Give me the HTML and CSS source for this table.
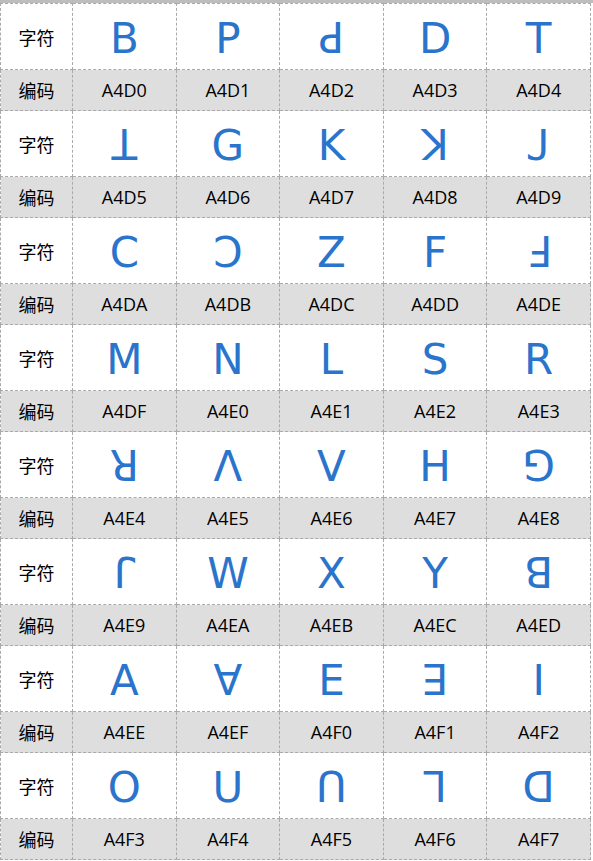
FILE: index.html
```html
<!DOCTYPE html>
<html lang="zh">
<head>
<meta charset="utf-8">
<title>Lisu</title>
<link rel="stylesheet" href="styles.css">
</head>
<body>
<div class="topstrip"></div>
<table class="chart">
<colgroup><col class="c-head"><col><col><col><col><col></colgroup>
<tbody>
<tr class="ch"><th>字符</th><td>&#xA4D0;</td><td>&#xA4D1;</td><td>&#xA4D2;</td><td>&#xA4D3;</td><td>&#xA4D4;</td></tr>
<tr class="cd"><th>编码</th><td>A4D0</td><td>A4D1</td><td>A4D2</td><td>A4D3</td><td>A4D4</td></tr>
<tr class="ch"><th>字符</th><td>&#xA4D5;</td><td>&#xA4D6;</td><td>&#xA4D7;</td><td>&#xA4D8;</td><td>&#xA4D9;</td></tr>
<tr class="cd"><th>编码</th><td>A4D5</td><td>A4D6</td><td>A4D7</td><td>A4D8</td><td>A4D9</td></tr>
<tr class="ch"><th>字符</th><td>&#xA4DA;</td><td>&#xA4DB;</td><td>&#xA4DC;</td><td>&#xA4DD;</td><td>&#xA4DE;</td></tr>
<tr class="cd"><th>编码</th><td>A4DA</td><td>A4DB</td><td>A4DC</td><td>A4DD</td><td>A4DE</td></tr>
<tr class="ch"><th>字符</th><td>&#xA4DF;</td><td>&#xA4E0;</td><td>&#xA4E1;</td><td>&#xA4E2;</td><td>&#xA4E3;</td></tr>
<tr class="cd"><th>编码</th><td>A4DF</td><td>A4E0</td><td>A4E1</td><td>A4E2</td><td>A4E3</td></tr>
<tr class="ch"><th>字符</th><td>&#xA4E4;</td><td>&#xA4E5;</td><td>&#xA4E6;</td><td>&#xA4E7;</td><td>&#xA4E8;</td></tr>
<tr class="cd"><th>编码</th><td>A4E4</td><td>A4E5</td><td>A4E6</td><td>A4E7</td><td>A4E8</td></tr>
<tr class="ch"><th>字符</th><td>&#xA4E9;</td><td>&#xA4EA;</td><td>&#xA4EB;</td><td>&#xA4EC;</td><td>&#xA4ED;</td></tr>
<tr class="cd"><th>编码</th><td>A4E9</td><td>A4EA</td><td>A4EB</td><td>A4EC</td><td>A4ED</td></tr>
<tr class="ch"><th>字符</th><td>&#xA4EE;</td><td>&#xA4EF;</td><td>&#xA4F0;</td><td>&#xA4F1;</td><td>&#xA4F2;</td></tr>
<tr class="cd"><th>编码</th><td>A4EE</td><td>A4EF</td><td>A4F0</td><td>A4F1</td><td>A4F2</td></tr>
<tr class="ch"><th>字符</th><td>&#xA4F3;</td><td>&#xA4F4;</td><td>&#xA4F5;</td><td>&#xA4F6;</td><td>&#xA4F7;</td></tr>
<tr class="cd"><th>编码</th><td>A4F3</td><td>A4F4</td><td>A4F5</td><td>A4F6</td><td>A4F7</td></tr>
</tbody>
</table>
</body>
</html>
```
FILE: styles.css
```css
html, body {
  margin: 0;
  padding: 0;
  background: #ffffff;
}
body {
  font-family: "Open Sans", "Noto Sans CJK SC", sans-serif;
  color: #000;
}
.topstrip {
  height: 3px;
  background: #bdbdbd;
}
.chart {
  width: 591px;
  border-collapse: collapse;
  table-layout: fixed;
}
.c-head {
  width: 72px;
}
.chart th,
.chart td {
  border: 1px dashed #aaaaaa;
  padding: 0;
  text-align: center;
  vertical-align: middle;
  font-weight: normal;
}
.chart th {
  font-family: "Noto Sans CJK SC", sans-serif;
  font-size: 18px;
}
.ch th,
.ch td {
  height: 65px;
}
.ch td {
  font-family: "Open Sans", "DejaVu Sans", "Noto Sans", sans-serif;
  font-size: 42px;
  line-height: 1;
  color: #2a74cc;
}
.cd th,
.cd td {
  height: 40px;
  background: #dedede;
  font-size: 18px;
  line-height: 1;
}
```
